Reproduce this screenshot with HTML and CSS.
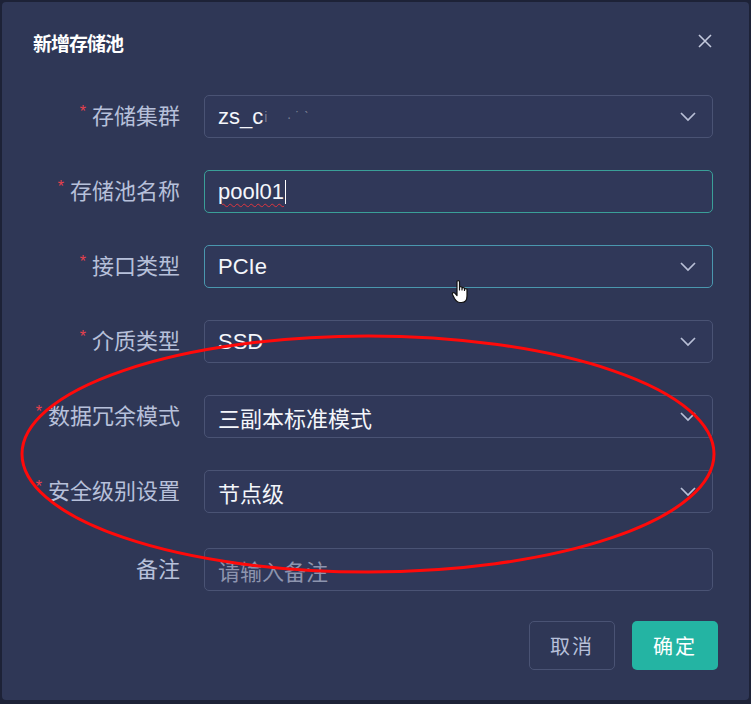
FILE: index.html
```html
<!DOCTYPE html>
<html>
<head>
  <title>新增存储池</title>
  <link rel="stylesheet" href="styles.css">
</head>
<body>
  <div class="dialog">
    <div class="dialog-header">
      <h2 class="dialog-title">新增存储池</h2>
      <span class="close-btn">
        <svg width="16" height="16" viewBox="0 0 16 16"><path d="M2 2 L14 14 M14 2 L2 14" stroke="#c3c9dc" stroke-width="1.6" fill="none"/></svg>
      </span>
    </div>

    <div class="form">
      <div class="form-row">
        <label class="form-label"><span class="req">*</span>存储集群</label>
        <div class="field select">
          <span class="value">zs_c<span class="blur">i&nbsp;&nbsp;&nbsp;&nbsp;&nbsp;·&nbsp;˙ ˋ</span></span>
          <svg class="chevron" width="16" height="10" viewBox="0 0 16 10"><path d="M1 1 L8 8 L15 1" stroke="#b8bfd6" stroke-width="1.7" fill="none"/></svg>
        </div>
      </div>

      <div class="form-row">
        <label class="form-label"><span class="req">*</span>存储池名称</label>
        <div class="field focused">
          <span class="value"><span class="typo">pool01</span><span class="caret"></span></span>
        </div>
      </div>

      <div class="form-row">
        <label class="form-label"><span class="req">*</span>接口类型</label>
        <div class="field select hovered">
          <span class="value">PCIe</span>
          <svg class="chevron" width="16" height="10" viewBox="0 0 16 10"><path d="M1 1 L8 8 L15 1" stroke="#b8bfd6" stroke-width="1.7" fill="none"/></svg>
        </div>
      </div>

      <div class="form-row">
        <label class="form-label"><span class="req">*</span>介质类型</label>
        <div class="field select">
          <span class="value">SSD</span>
          <svg class="chevron" width="16" height="10" viewBox="0 0 16 10"><path d="M1 1 L8 8 L15 1" stroke="#b8bfd6" stroke-width="1.7" fill="none"/></svg>
        </div>
      </div>

      <div class="form-row">
        <label class="form-label"><span class="req">*</span>数据冗余模式</label>
        <div class="field select">
          <span class="value">三副本标准模式</span>
          <svg class="chevron" width="16" height="10" viewBox="0 0 16 10"><path d="M1 1 L8 8 L15 1" stroke="#b8bfd6" stroke-width="1.7" fill="none"/></svg>
        </div>
      </div>

      <div class="form-row">
        <label class="form-label"><span class="req">*</span>安全级别设置</label>
        <div class="field select">
          <span class="value">节点级</span>
          <svg class="chevron" width="16" height="10" viewBox="0 0 16 10"><path d="M1 1 L8 8 L15 1" stroke="#b8bfd6" stroke-width="1.7" fill="none"/></svg>
        </div>
      </div>

      <div class="form-row remark-row">
        <label class="form-label">备注</label>
        <div class="field">
          <span class="placeholder">请输入备注</span>
        </div>
      </div>
    </div>

    <div class="dialog-footer">
      <button class="btn btn-cancel">取消</button>
      <button class="btn btn-ok">确定</button>
    </div>
  </div>

  <!-- annotation drawn over the screenshot -->
  <svg class="annotation" width="751" height="704" viewBox="0 0 751 704">
    <ellipse cx="368" cy="454" rx="346" ry="118" fill="none" stroke="#ff0a0a" stroke-width="3"/>
  </svg>

  <svg class="hand-cursor" width="22" height="26" viewBox="0 0 22 26">
    <path d="M6 2.5 C6 1.2 8.5 1.2 8.5 2.5 L8.5 11 L8.5 8.5 C8.5 7.3 11 7.3 11 8.5 L11 11 L11 9.5 C11 8.3 13.5 8.3 13.5 9.5 L13.5 11.5 L13.5 10.5 C13.5 9.3 16 9.3 16 10.5 L16 17 C16 21 14 23.5 10.5 23.5 L9 23.5 C6.5 23.5 5 22 3.5 19.5 L1.5 15.5 C0.8 14 2.5 12.8 3.8 14.2 L6 16.5 Z" fill="#ffffff" stroke="#111111" stroke-width="1.2" stroke-linejoin="round"/>
  </svg>
</body>
</html>
```

FILE: styles.css
```css
body {
  margin: 0;
  background-color: #1d2237;
  font-family: "Liberation Sans", "Noto Sans CJK SC", sans-serif;
  width: 751px;
  height: 704px;
  position: relative;
  overflow: hidden;
}

.dialog {
  margin: 2px 2px 0 2px;
  height: 698px;
  background-color: #2f3756;
  border-radius: 4px;
  box-sizing: border-box;
  display: flex;
  flex-direction: column;
}

.dialog-header {
  display: flex;
  align-items: center;
  justify-content: space-between;
  padding: 25px 36px 0 31px;
  height: 30px;
}

.dialog-title {
  margin: 0;
  font-size: 19px;
  font-weight: bold;
  color: #ffffff;
  letter-spacing: -1px;
  font-family: "Noto Sans CJK SC", sans-serif;
}

.close-btn {
  display: flex;
  width: 16px;
  height: 16px;
  margin-top: -2px;
}

.form {
  display: flex;
  flex-direction: column;
  gap: 32px;
  padding: 38px 36px 0 28px;
}

.form-row {
  display: flex;
  align-items: center;
  gap: 24px;
}

.remark-row {
  margin-top: 3px;
}

.form-label {
  width: 150px;
  flex-shrink: 0;
  text-align: right;
  font-size: 22px;
  color: #b7c0da;
  font-family: "Noto Sans CJK SC", sans-serif;
  display: flex;
  justify-content: flex-end;
  align-items: center;
  margin-bottom: 5px;
}

.req {
  color: #e8414d;
  font-size: 16px;
  margin-right: 6px;
  margin-top: -4px;
  font-family: "Liberation Sans", sans-serif;
}

.field {
  flex: 1;
  height: 43px;
  box-sizing: border-box;
  border: 1px solid #4a5374;
  border-radius: 5px;
  background-color: #303859;
  display: flex;
  align-items: center;
  justify-content: space-between;
  padding: 0 16px 0 13px;
}

.field.focused {
  border-color: #3a9f98;
}

.field.hovered {
  border-color: #4a97ae;
}

.value {
  font-size: 22px;
  color: #f4f6fb;
  font-family: "Liberation Sans", "Noto Sans CJK SC", sans-serif;
  display: flex;
  align-items: center;
}

.blur {
  color: rgba(255, 255, 255, 0.35);
  font-size: 14px;
  margin-left: 1px;
}

.typo {
  text-decoration: underline wavy #e0353f;
  text-decoration-thickness: 1px;
  text-underline-offset: 4px;
}

.caret {
  display: inline-block;
  width: 1px;
  height: 24px;
  background-color: #ffffff;
  margin-left: 1px;
}

.placeholder {
  font-size: 22px;
  color: #8d94ae;
  font-family: "Noto Sans CJK SC", sans-serif;
}

.chevron {
  flex-shrink: 0;
}

.dialog-footer {
  display: flex;
  justify-content: flex-end;
  gap: 17px;
  padding: 30px 31px 0 0;
}

.btn {
  width: 86px;
  height: 49px;
  border-radius: 5px;
  font-size: 20px;
  font-family: "Noto Sans CJK SC", sans-serif;
  letter-spacing: 2px;
  cursor: pointer;
}

.btn-cancel {
  background-color: transparent;
  border: 1px solid #4a5374;
  color: #b7c0da;
}

.btn-ok {
  background-color: #24b4a3;
  border: none;
  color: #ffffff;
}

.annotation {
  position: absolute;
  top: 0;
  left: 0;
  pointer-events: none;
}

.hand-cursor {
  position: absolute;
  left: 451px;
  top: 279px;
  pointer-events: none;
}
```
